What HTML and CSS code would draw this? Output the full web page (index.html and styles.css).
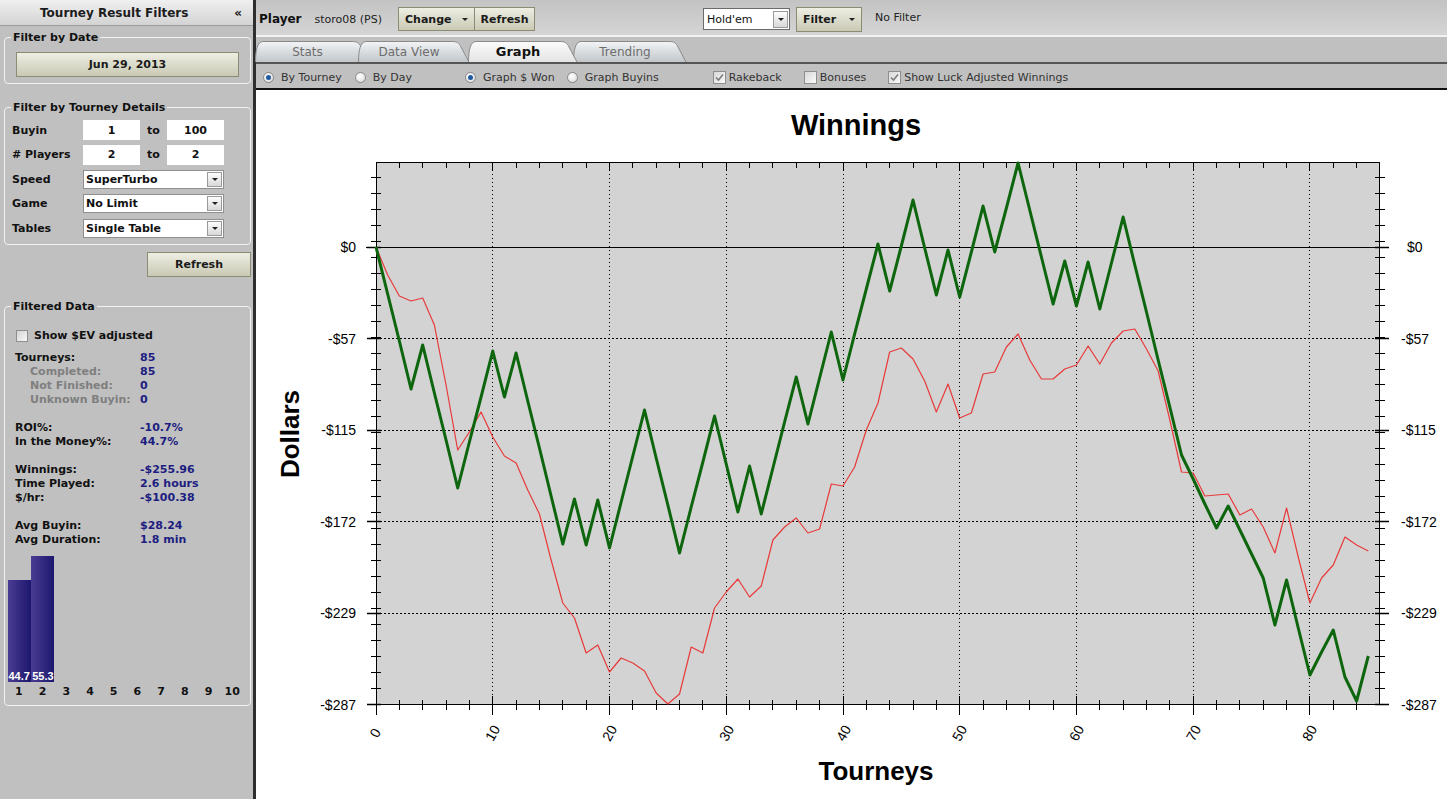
FILE: index.html
```html
<!DOCTYPE html>
<html>
<head>
<meta charset="utf-8">
<title>Tourney Results</title>
<link rel="stylesheet" href="styles.css">
</head>
<body>
<div class="app">
  <aside class="side">
    <div class="side-title"><span>Tourney Result Filters</span><span class="collapse">«</span></div>

    <fieldset class="group g-date">
      <legend>Filter by Date</legend>
      <button class="btn btn-date">Jun 29, 2013</button>
    </fieldset>

    <fieldset class="group g-details">
      <legend>Filter by Tourney Details</legend>
      <div class="form">
        <label>Buyin</label><div class="field">1</div><div class="to">to</div><div class="field">100</div>
        <label># Players</label><div class="field">2</div><div class="to">to</div><div class="field">2</div>
        <label>Speed</label><div class="select"><span>SuperTurbo</span><span class="dd"></span></div>
        <label>Game</label><div class="select"><span>No Limit</span><span class="dd"></span></div>
        <label>Tables</label><div class="select"><span>Single Table</span><span class="dd"></span></div>
      </div>
    </fieldset>

    <div class="refresh-row"><button class="btn btn-refresh">Refresh</button></div>

    <fieldset class="group g-data">
      <legend>Filtered Data</legend>
      <div class="ev"><span class="cb"></span>Show $EV adjusted</div>
      <div class="stats">
        <div class="row"><span class="k">Tourneys:</span><span class="v">85</span></div>
        <div class="row sub"><span class="k">Completed:</span><span class="v">85</span></div>
        <div class="row sub"><span class="k">Not Finished:</span><span class="v">0</span></div>
        <div class="row sub"><span class="k">Unknown Buyin:</span><span class="v">0</span></div>
        <div class="row gap"><span class="k">ROI%:</span><span class="v">-10.7%</span></div>
        <div class="row"><span class="k">In the Money%:</span><span class="v">44.7%</span></div>
        <div class="row gap"><span class="k">Winnings:</span><span class="v">-$255.96</span></div>
        <div class="row"><span class="k">Time Played:</span><span class="v">2.6 hours</span></div>
        <div class="row"><span class="k">$/hr:</span><span class="v">-$100.38</span></div>
        <div class="row gap"><span class="k">Avg Buyin:</span><span class="v">$28.24</span></div>
        <div class="row"><span class="k">Avg Duration:</span><span class="v">1.8 min</span></div>
      </div>
      <div class="hist">
        <div class="bars">
          <div class="col"><div class="bar b1"><span>44.7</span></div></div>
          <div class="col"><div class="bar b2"><span>55.3</span></div></div>
          <div class="col"></div><div class="col"></div><div class="col"></div><div class="col"></div>
          <div class="col"></div><div class="col"></div><div class="col"></div><div class="col"></div>
        </div>
        <div class="hlabels"><span>1</span><span>2</span><span>3</span><span>4</span><span>5</span><span>6</span><span>7</span><span>8</span><span>9</span><span>10</span></div>
      </div>
    </fieldset>
  </aside>

  <main class="main">
    <div class="toolbar">
      <span class="player">Player</span>
      <span class="pname">storo08 (PS)</span>
      <button class="btn tb-btn b-change">Change<span class="arrow"></span></button>
      <button class="btn tb-btn b-refresh">Refresh</button>
      <div class="sel-game"><span>Hold'em</span><span class="dd"></span></div>
      <button class="btn tb-btn b-filter">Filter<span class="arrow"></span></button>
      <span class="nofilter">No Filter</span>
    </div>

    <div class="tabs">
      <div class="tab t-stats">
        <svg class="tab-bg" width="115" height="21">
          <defs>
            <linearGradient id="tabIn" x1="0" y1="0" x2="0" y2="1">
              <stop offset="0" stop-color="#f3f5f7"/>
              <stop offset="0.45" stop-color="#dcdfe2"/>
              <stop offset="1" stop-color="#c4c7ca"/>
            </linearGradient>
            <linearGradient id="tabOn" x1="0" y1="0" x2="0" y2="1">
              <stop offset="0" stop-color="#fbfbfb"/>
              <stop offset="1" stop-color="#e4e4e4"/>
            </linearGradient>
          </defs>
          <path d="M0.5 21 C0.5 9 2.5 0.5 8 0.5 H97 C102 0.5 104 2 106 6 L114 21" fill="url(#tabIn)" stroke="#8a8a8a"/>
        </svg>
        <span>Stats</span>
      </div>
      <div class="tab t-dv">
        <svg class="tab-bg" width="112" height="21"><path d="M0.5 21 C0.5 9 2.5 0.5 8 0.5 H94 C99 0.5 101 2 103 6 L111 21" fill="url(#tabIn)" stroke="#8a8a8a"/></svg>
        <span>Data View</span>
      </div>
      <div class="tab t-graph">
        <svg class="tab-bg" width="110" height="21"><path d="M0.5 21 C0.5 9 2.5 0.5 8 0.5 H92 C97 0.5 99 2 101 6 L109 21" fill="url(#tabOn)" stroke="#8a8a8a"/></svg>
        <span>Graph</span>
      </div>
      <div class="tab t-trend">
        <svg class="tab-bg" width="114" height="21"><path d="M0.5 21 C0.5 9 2.5 0.5 8 0.5 H96 C101 0.5 103 2 105 6 L113 21" fill="url(#tabIn)" stroke="#8a8a8a"/></svg>
        <span>Trending</span>
      </div>
    </div>

    <div class="opts">
      <span class="opt"><span class="radio on"></span>By Tourney</span>
      <span class="opt o-day"><span class="radio"></span>By Day</span>
      <span class="opt o-won"><span class="radio on"></span>Graph $ Won</span>
      <span class="opt o-buyins"><span class="radio"></span>Graph Buyins</span>
      <span class="opt ck o-rake"><span class="chk"><svg width="11" height="11"><path d="M2 5.5 L4.5 8 L9 2.5" stroke="#7c7c7c" stroke-width="1.6" fill="none"/></svg></span>Rakeback</span>
      <span class="opt ck o-bonus"><span class="chk"></span>Bonuses</span>
      <span class="opt ck o-luck"><span class="chk"><svg width="11" height="11"><path d="M2 5.5 L4.5 8 L9 2.5" stroke="#7c7c7c" stroke-width="1.6" fill="none"/></svg></span>Show Luck Adjusted Winnings</span>
    </div>

    <div class="chart-wrap">
      <svg class="chart" width="1191" height="709" viewBox="256 90 1191 709">
        <text class="c-title" x="856" y="135" text-anchor="middle">Winnings</text>
        <text class="c-axis" transform="translate(299 434) rotate(-90)" text-anchor="middle">Dollars</text>
        <text class="c-axis" x="876" y="780" text-anchor="middle">Tourneys</text>

        <rect x="376" y="162" width="1004" height="543" fill="#d3d3d3"/>

        <path d="M492.5 162V705M609.5 162V705M726.5 162V705M843.5 162V705M959.5 162V705M1076.5 162V705M1193.5 162V705M1309.5 162V705" stroke="#000" stroke-width="1" stroke-dasharray="1 3" fill="none"/>
        <path d="M376 338.5H1380M376 430.5H1380M376 521.5H1380M376 613.5H1380" stroke="#000" stroke-width="1" stroke-dasharray="2 2" fill="none"/>

        <rect x="376.5" y="162.5" width="1003" height="542" fill="none" stroke="#000"/>
        <path d="M366 247.5H1389" stroke="#000" fill="none"/>

        <path id="yminor" d="M371 688.5h10M371 672.5h10M371 656.5h10M371 640.5h10M371 624.5h10M371 608.5h10M371 592.5h10M371 576.5h10M371 560.5h10M371 544.5h10M371 528.5h10M371 512.5h10M371 496.5h10M371 480.5h10M371 464.5h10M371 448.5h10M371 432.5h10M371 416.5h10M371 400.5h10M371 384.5h10M371 369.5h10M371 353.5h10M371 337.5h10M371 321.5h10M371 305.5h10M371 289.5h10M371 273.5h10M371 257.5h10M371 241.5h10M371 225.5h10M371 209.5h10M371 193.5h10M371 177.5h10" stroke="#000" fill="none"/>
        <use href="#yminor" x="1004"/>
        <path id="ymajor" d="M367 247.5h14M367 338.5h14M367 430.5h14M367 521.5h14M367 613.5h14M367 704.5h14" stroke="#000" stroke-width="1.4" fill="none"/>
        <use href="#ymajor" x="1008"/>

        <path d="M399.5 162v6M422.5 162v6M446.5 162v6M469.5 162v6M516.5 162v6M539.5 162v6M562.5 162v6M586.5 162v6M632.5 162v6M656.5 162v6M679.5 162v6M702.5 162v6M749.5 162v6M772.5 162v6M796.5 162v6M819.5 162v6M866.5 162v6M889.5 162v6M913.5 162v6M936.5 162v6M983.5 162v6M1006.5 162v6M1029.5 162v6M1053.5 162v6M1099.5 162v6M1123.5 162v6M1146.5 162v6M1169.5 162v6M1216.5 162v6M1239.5 162v6M1263.5 162v6M1286.5 162v6M1333.5 162v6M1356.5 162v6" stroke="#000" fill="none"/>
        <path d="M399.5 700v10M422.5 700v10M446.5 700v10M469.5 700v10M516.5 700v10M539.5 700v10M562.5 700v10M586.5 700v10M632.5 700v10M656.5 700v10M679.5 700v10M702.5 700v10M749.5 700v10M772.5 700v10M796.5 700v10M819.5 700v10M866.5 700v10M889.5 700v10M913.5 700v10M936.5 700v10M983.5 700v10M1006.5 700v10M1029.5 700v10M1053.5 700v10M1099.5 700v10M1123.5 700v10M1146.5 700v10M1169.5 700v10M1216.5 700v10M1239.5 700v10M1263.5 700v10M1286.5 700v10M1333.5 700v10M1356.5 700v10" stroke="#000" fill="none"/>
        <path d="M492.5 162v9M609.5 162v9M726.5 162v9M843.5 162v9M959.5 162v9M1076.5 162v9M1193.5 162v9M1309.5 162v9" stroke="#000" fill="none"/>
        <path d="M376.5 696v19M492.5 696v19M609.5 696v19M726.5 696v19M843.5 696v19M959.5 696v19M1076.5 696v19M1193.5 696v19M1309.5 696v19" stroke="#000" fill="none"/>

        <g class="c-lbl" text-anchor="end">
          <text x="356" y="252">$0</text>
          <text x="356" y="343.5">-$57</text>
          <text x="356" y="435">-$115</text>
          <text x="356" y="526.5">-$172</text>
          <text x="356" y="618">-$229</text>
          <text x="356" y="709.5">-$287</text>
        </g>
        <g class="c-lbl" text-anchor="start">
          <text x="1407" y="252">$0</text>
          <text x="1401" y="343.5">-$57</text>
          <text x="1401" y="435">-$115</text>
          <text x="1401" y="526.5">-$172</text>
          <text x="1401" y="618">-$229</text>
          <text x="1401" y="709.5">-$287</text>
        </g>
        <g class="c-lbl" text-anchor="middle" dominant-baseline="central">
          <text transform="translate(375 733) rotate(-60)">0</text>
          <text transform="translate(492.5 733) rotate(-60)">10</text>
          <text transform="translate(609.5 733) rotate(-60)">20</text>
          <text transform="translate(726.5 733) rotate(-60)">30</text>
          <text transform="translate(843.5 733) rotate(-60)">40</text>
          <text transform="translate(959.5 733) rotate(-60)">50</text>
          <text transform="translate(1076.5 733) rotate(-60)">60</text>
          <text transform="translate(1193.5 733) rotate(-60)">70</text>
          <text transform="translate(1309.5 733) rotate(-60)">80</text>
        </g>

        <g transform="translate(376 0) scale(11.674 1)">
          <polyline class="s-luck" vector-effect="non-scaling-stroke" points="0,247 1,275 2,296 3,301 4,298 5,325 6,385 7,450 8,432 9,412 10,437 11,456 12,463 13,490 14,514 15,560 16,603 17,618 18,653 19,645 20,672 21,658 22,663 23,671 24,693 25,704 26,694 27,647 28,653 29,608 30,592 31,579 32,597 33,586 34,540 35,527 36,518 37,533 38,529 39,484 40,486 41,467 42,430 43,403 44,352 45,348 46,359 47,381 48,412 49,384 50,418 51,413 52,374 53,372 54,347 55,334 56,360 57,379 58,379 59,369 60,365 61,346 62,364 63,343 64,331 65,329 66,349 67,371 68,420 69,472 70,473 71,496 72,495 73,494 74,515 75,509 76,527 77,553 78,508 79,557 80,603 81,578 82,565 83,537 84,545 85,551"/>
          <polyline class="s-won" vector-effect="non-scaling-stroke" points="0,247 1,294 2,341 3,389 4,345 5,393 6,440 7,488 8,442 9,397 10,351 11,397 12,353 13,401 14,448 15,496 16,544 17,499 18,545 19,500 20,548 21,502 22,456 23,410 24,458 25,505 26,553 27,507 28,462 29,416 30,464 31,512 32,466 33,514 34,468 35,422 36,377 37,424 38,378 39,332 40,380 41,334 42,289 43,244 44,291 45,246 46,200 47,248 48,295 49,250 50,297 51,252 52,206 53,252 54,208 55,163 56,210 57,257 58,304 59,261 60,306 61,262 62,309 63,263 64,217 65,265 66,312 67,360 68,407 69,455 70,479 71,504 72,528 73,506 74,530 75,554 76,578 77,625 78,580 79,628 80,675 81,652 82,630 83,677 84,701 85,656"/>
        </g>
      </svg>
    </div>
  </main>
</div>
</body>
</html>
```

FILE: styles.css
```css
* { box-sizing: border-box; }
html, body { margin: 0; padding: 0; }
body {
  width: 1447px;
  height: 799px;
  overflow: hidden;
  font-family: "DejaVu Sans", Verdana, sans-serif;
  font-size: 11px;
  color: #111;
  background: #c0c0c0;
}
.app { display: flex; height: 799px; }

/* ---------- side panel ---------- */
.side {
  width: 256px;
  flex: none;
  border-right: 3px solid #2e2e2e;
  background: #c0c0c0;
  display: flex;
  flex-direction: column;
}
.side-title {
  height: 26px;
  border-bottom: 1px solid #9c9c9c;
  background: linear-gradient(#f0f0f0, #d3d3d3);
  display: flex;
  align-items: center;
  justify-content: space-between;
  padding: 0 11px 0 40px;
  font-weight: bold;
  font-size: 12px;
  color: #1c1c1c;
}
.collapse { font-size: 12px; }

.group {
  margin: 5px 2px 0 4px;
  padding: 0 6px 6px;
  border: 1px solid #f2f2f2;
  border-radius: 4px;
  min-width: 0;
}
.group legend {
  padding: 0 2px;
  font-weight: bold;
  font-size: 11px;
  line-height: 13px;
  color: #111;
}
.g-details { margin-top: 17px; }
.g-data { margin-top: 23px; }

.btn {
  font-family: "DejaVu Sans", Verdana, sans-serif;
  font-weight: bold;
  font-size: 11px;
  color: #1a1a1a;
  border: 1px solid #8c8c74;
  background: linear-gradient(#eeeee3, #c9c9b4);
  display: flex;
  align-items: center;
  justify-content: center;
  padding: 0;
  margin: 0;
}
.btn-date { width: 223px; height: 25px; margin: 8px 0 0 5px; }

.form {
  display: grid;
  grid-template-columns: 72px 57px 27px 57px;
  grid-auto-rows: 20px;
  row-gap: 4.5px;
  margin-top: 6px;
  align-items: center;
}
.form label { padding-left: 1px; font-weight: bold; }
.field {
  background: #fff;
  height: 20px;
  display: flex;
  align-items: center;
  justify-content: center;
  font-weight: bold;
}
.to { text-align: center; font-weight: bold; }
.select {
  grid-column: 2 / 5;
  height: 19px;
  background: #fff;
  border: 1px solid #8f8f8f;
  display: flex;
  align-items: center;
  justify-content: space-between;
  padding-left: 2px;
  font-weight: bold;
}
.dd {
  width: 15px;
  height: 15px;
  border: 1px solid #9a9a9a;
  background: linear-gradient(#fdfdfd, #d8d8d8);
  margin-right: 1px;
  display: flex;
  align-items: center;
  justify-content: center;
}
.dd::after {
  content: "";
  border-left: 3px solid transparent;
  border-right: 3px solid transparent;
  border-top: 3px solid #222;
}

.refresh-row { display: flex; justify-content: flex-end; padding-right: 2px; margin-top: 7px; }
.btn-refresh { width: 104px; height: 25px; }

.ev {
  display: flex;
  align-items: center;
  gap: 6px;
  margin: 15px 0 0 5px;
  font-weight: bold;
  line-height: 15px;
}
.cb {
  width: 12px;
  height: 12px;
  border: 1px solid #8e8e8e;
  background: linear-gradient(135deg, #d4d4d4, #f8f8f8);
}
.stats { margin-top: 8px; padding-left: 4px; font-weight: bold; line-height: 14px; }
.row { display: grid; grid-template-columns: 125px auto; }
.row.sub .k { padding-left: 15px; color: #7f7f7f; }
.row.gap { margin-top: 14px; }
.v { color: #1d1d80; }

.hist { margin: 5px 0 0 -4px; }
.bars { display: flex; height: 130px; align-items: flex-end; }
.col { width: 24px; display: flex; justify-content: flex-end; }
.bar {
  width: 23px;
  background: linear-gradient(90deg, #4a3c92, #1c186e);
  display: flex;
  align-items: flex-end;
  justify-content: center;
}
.b1 { height: 102px; }
.b2 { height: 126px; }
.bar span {
  color: #fff;
  font-family: "Liberation Sans", Arial, sans-serif;
  font-weight: bold;
  font-size: 11px;
  line-height: 12px;
}
.hlabels { display: flex; margin-top: 3px; line-height: 14px; font-weight: bold; }
.hlabels span { width: 24px; text-align: center; }

/* ---------- main ---------- */
.main {
  flex: 1;
  min-width: 0;
  display: flex;
  flex-direction: column;
  background: #fff;
}
.toolbar {
  height: 37px;
  flex: none;
  border-bottom: 2px solid #f2f2f2;
  background: linear-gradient(#c3c3c3, #d5d5d5);
  display: flex;
  align-items: center;
  padding: 3px 0 0 3px;
}
.player { font-weight: bold; font-size: 12px; color: #111; }
.pname { margin-left: 13px; color: #222; }
.tb-btn { height: 24px; }
.b-change { margin-left: 16px; width: 77px; justify-content: flex-start; padding-left: 6px; }
.b-refresh { width: 60px; border-left: none; }
.arrow {
  margin-left: 10px;
  border-left: 3px solid transparent;
  border-right: 3px solid transparent;
  border-top: 3px solid #222;
}
.sel-game {
  margin-left: 168px;
  width: 87px;
  height: 22px;
  background: #fff;
  border: 1px solid #6b6b6b;
  display: flex;
  align-items: center;
  justify-content: space-between;
  padding-left: 3px;
  color: #111;
}
.sel-game .dd { height: 17px; }
.b-filter { margin-left: 6px; width: 66px; height: 25px; justify-content: flex-start; padding-left: 6px; }
.b-filter .arrow { margin-left: 13px; }
.nofilter { margin-left: 13px; margin-bottom: 4px; color: #222; }

.tabs {
  height: 27px;
  flex: none;
  border-bottom: 2px solid #555;
  background: #c0c0c0;
  display: flex;
  align-items: flex-end;
}
.tab {
  position: relative;
  height: 21px;
  display: flex;
  align-items: center;
  justify-content: center;
  padding-right: 10px;
  font-size: 12px;
  color: #6d6d6d;
}
.tab-bg { position: absolute; left: 0; top: 0; }
.tab > span { position: relative; }
.t-stats { width: 115px; margin-left: -1px; z-index: 1; }
.t-dv { width: 112px; margin-left: -12px; z-index: 2; }
.t-graph { width: 110px; margin-left: -2px; z-index: 4; font-weight: bold; font-size: 13px; color: #111; }
.t-trend { width: 114px; margin-left: -5px; z-index: 3; }

.opts {
  height: 26px;
  flex: none;
  border-bottom: 2px solid #111;
  background: #c0c0c0;
  display: flex;
  align-items: center;
  padding: 2px 0 0 7px;
  color: #333;
}
.opt { display: flex; align-items: center; gap: 7px; }
.opt.ck { gap: 3px; }
.o-day { margin-left: 13px; }
.o-won { margin-left: 53px; }
.o-buyins { margin-left: 12px; }
.o-rake { margin-left: 54px; }
.o-bonus { margin-left: 22px; }
.o-luck { margin-left: 22px; }
.radio {
  width: 11px;
  height: 11px;
  border-radius: 50%;
  border: 1px solid #8a8a8a;
  background: radial-gradient(circle at 40% 35%, #ffffff, #d6d6d6);
  display: flex;
  align-items: center;
  justify-content: center;
}
.radio.on::after {
  content: "";
  width: 5px;
  height: 5px;
  border-radius: 50%;
  background: #1f5aa0;
}
.chk {
  width: 13px;
  height: 13px;
  border: 1px solid #8e8e8e;
  background: linear-gradient(135deg, #d8d8d8, #fafafa);
  display: flex;
  align-items: center;
  justify-content: center;
}
.chk svg { display: block; }

.chart-wrap { flex: 1; background: #fff; }
.chart { display: block; }
.c-title { font-family: "Liberation Sans", Arial, sans-serif; font-weight: bold; font-size: 29px; fill: #000; }
.c-axis { font-family: "Liberation Sans", Arial, sans-serif; font-weight: bold; font-size: 26px; fill: #000; }
.c-lbl { font-family: "Liberation Sans", Arial, sans-serif; font-size: 14px; fill: #000; }
.s-won { fill: none; stroke: #0d660d; stroke-width: 3; stroke-linejoin: round; }
.s-luck { fill: none; stroke: #e83a3a; stroke-width: 1.2; stroke-linejoin: round; }
```
